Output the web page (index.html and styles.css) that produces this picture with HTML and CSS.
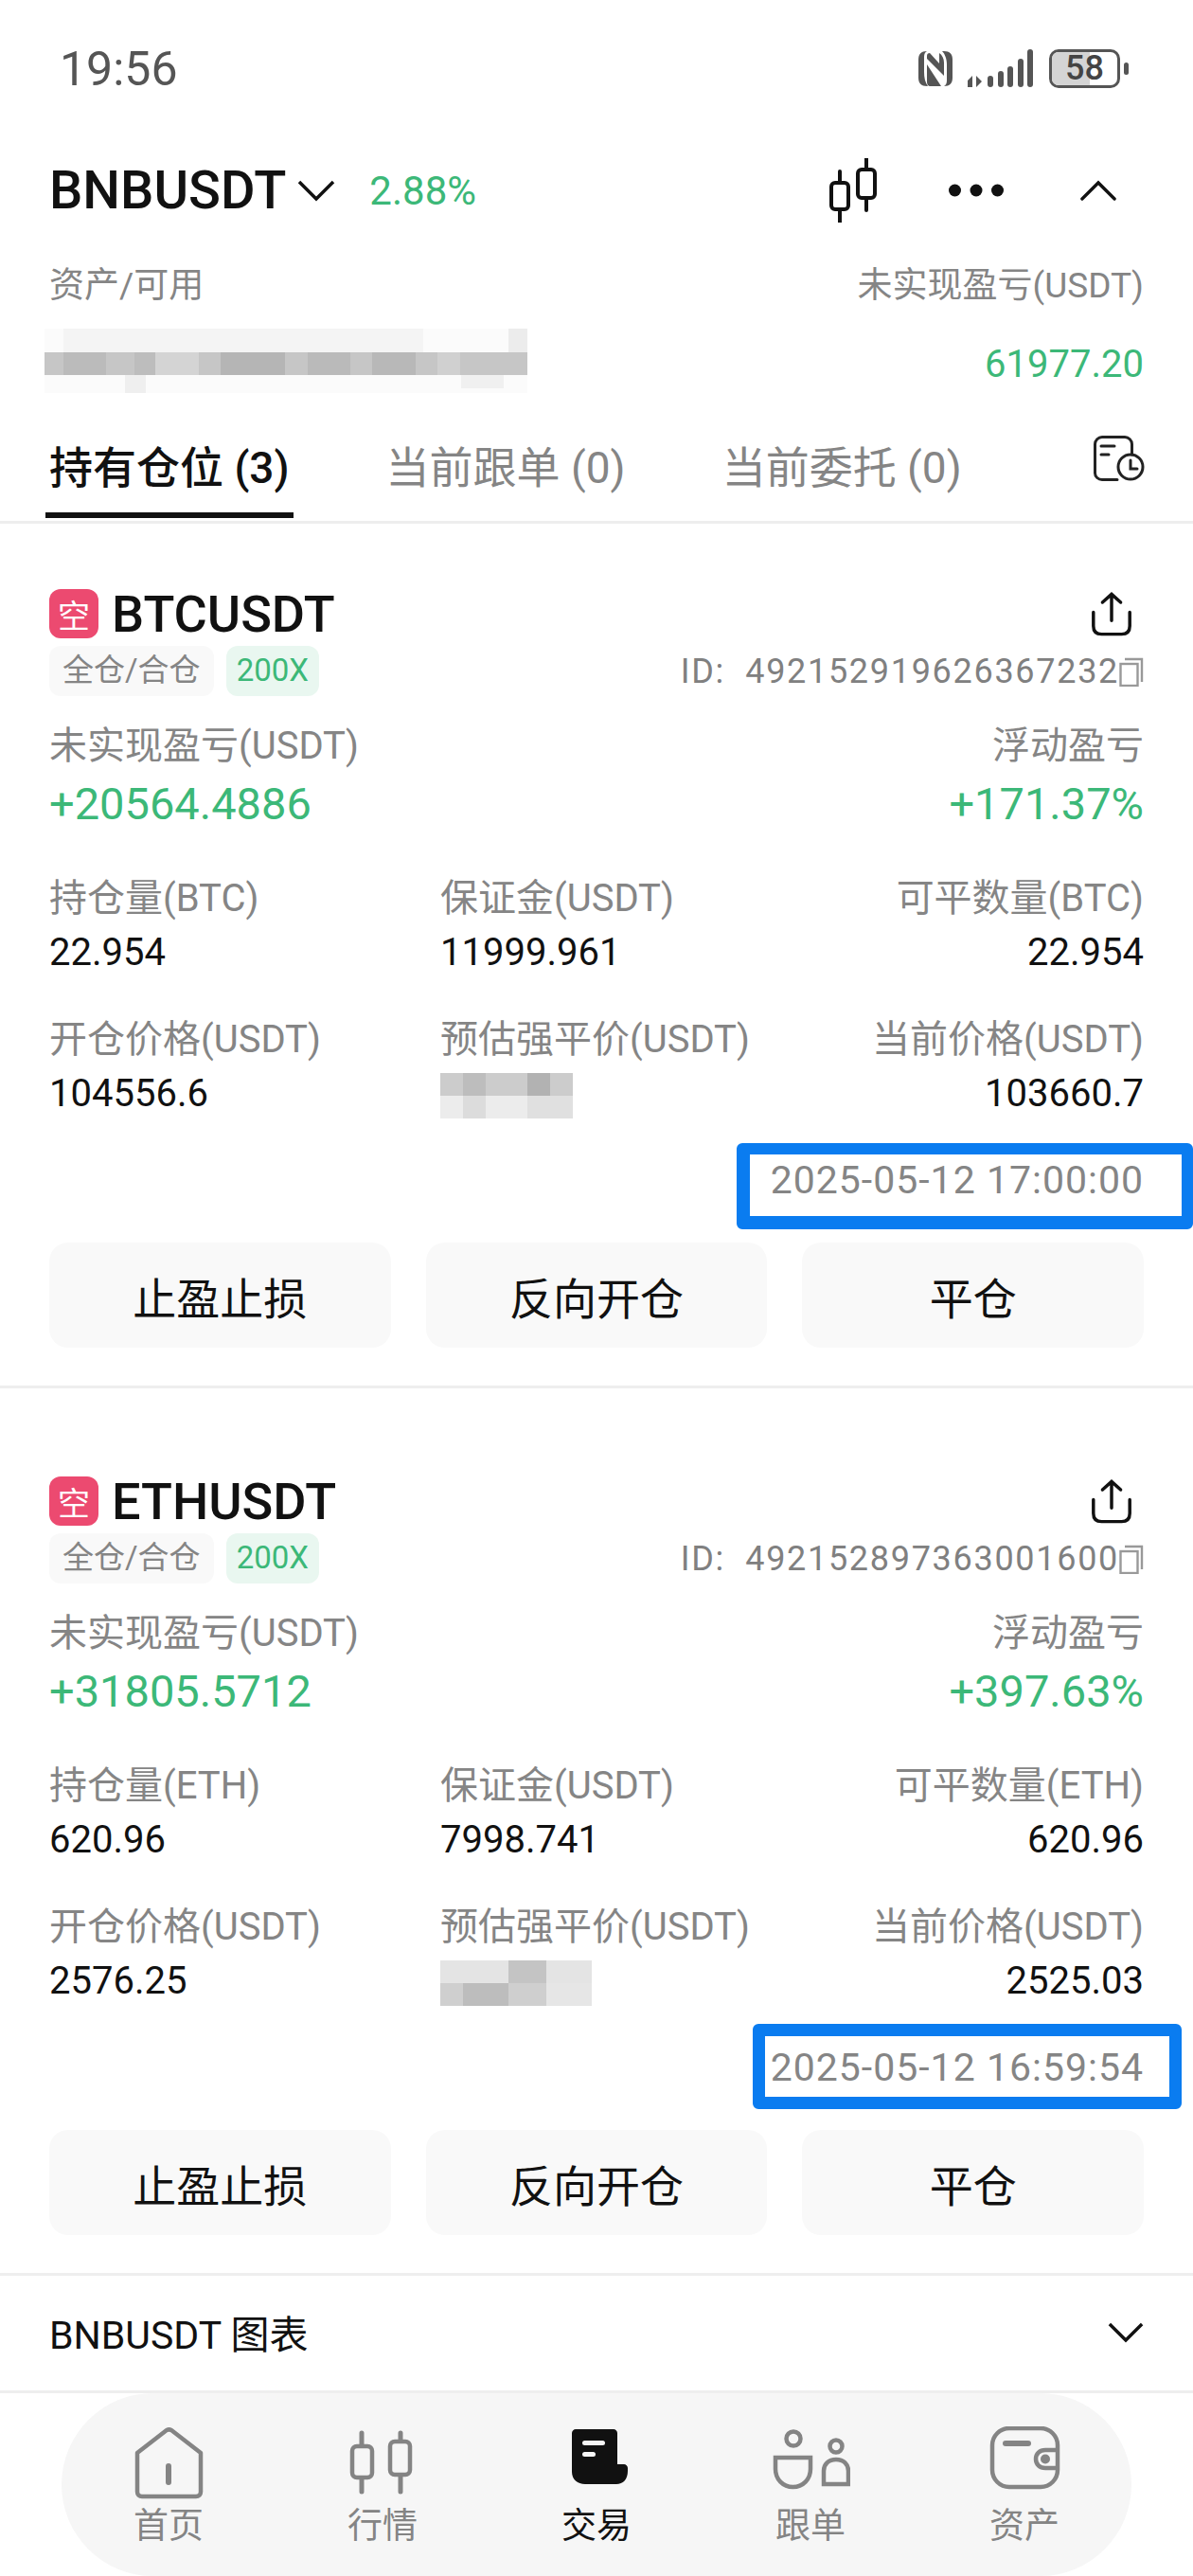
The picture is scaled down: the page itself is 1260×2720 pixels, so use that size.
FILE: index.html

```html
<!DOCTYPE html>
<html lang="zh-CN">
<head>
  <meta charset="UTF-8">
  <meta name="viewport" content="width=device-width, initial-scale=1">
  <title>BNBUSDT 持有仓位</title>
  <link rel="stylesheet" href="styles.css">
</head>
<body>

  <div class="status-bar">
    <span class="clock">19:56</span>
    <div class="status-icons">
      <svg class="ic-nfc" viewBox="0 0 36 37">
        <path d="M9 0C3 0 0 3 0 9v19c0 6 3 9 9 9h1C7 33 6 28 6 22V6c0-3 1-5 3-6zM27 37c6 0 9-3 9-9V9c0-6-3-9-9-9h-2c3 3 5 8 5 14v17c0 3-1 5-3 6zM12 2c-2 0-3 1-3 3v3l18 18V12c0-4-2-8-5-10v11L12 2zM9 14v18c0 3 1 5 4 5h11L9 14z" fill="#555"/>
      </svg>
      <svg class="ic-signal" viewBox="0 0 70 40">
        <path d="M0 33l5-5v12H0zM9 28v12l6-6z" fill="#555"/>
        <rect x="21" y="28" width="6" height="12" rx="3" fill="#555"/>
        <rect x="32" y="23" width="6" height="17" rx="3" fill="#555"/>
        <rect x="42" y="18" width="6" height="22" rx="3" fill="#555"/>
        <rect x="53" y="10" width="6" height="30" rx="3" fill="#555"/>
        <rect x="63" y="0" width="6" height="40" rx="3" fill="#555"/>
      </svg>
      <div class="battery">
        <div class="battery-fill"></div>
        <span class="battery-num">58</span>
      </div>
      <div class="battery-tip"></div>
    </div>
  </div>

  <div class="symbol-bar">
    <span class="symbol-name">BNBUSDT</span>
    <svg class="ic-chev-sm" viewBox="0 0 40 24"><path d="M2 3l18 18L38 3" fill="none" stroke="#111" stroke-width="3.5"/></svg>
    <span class="symbol-change">2.88%</span>
    <div class="symbol-actions">
      <svg class="ic-candle" viewBox="0 0 50 68">
        <path d="M11 14v12M11 54v14M39 0v12M39 42v13" stroke="#111" stroke-width="4" stroke-linecap="round"/>
        <rect x="2" y="26" width="18" height="28" rx="4" fill="none" stroke="#111" stroke-width="4"/>
        <rect x="30" y="12" width="18" height="30" rx="4" fill="none" stroke="#111" stroke-width="4"/>
      </svg>
      <svg class="ic-dots" viewBox="0 0 58 14">
        <circle cx="6.5" cy="7" r="6.5" fill="#111"/><circle cx="29" cy="7" r="6.5" fill="#111"/><circle cx="51.5" cy="7" r="6.5" fill="#111"/>
      </svg>
      <svg class="ic-chev-up" viewBox="0 0 40 24"><path d="M2 21L20 3l18 18" fill="none" stroke="#111" stroke-width="3.5" stroke-linecap="round"/></svg>
    </div>
  </div>

  <div class="asset-row">
    <div class="asset-left">
      <div class="label asset-label">资产/可用</div>
      <svg class="mosaic-wide" viewBox="0 0 510 68">
        <rect y="0" width="510" height="68" fill="#fbfbfb"/>
        <rect x="20" y="0" width="380" height="25" fill="#f4f4f4"/>
        <rect x="490" y="0" width="20" height="25" fill="#ececec"/>
        <rect y="25" width="510" height="24" fill="#c6c6c6"/>
        <rect x="20" y="25" width="45" height="24" fill="#bbb"/>
        <rect x="95" y="25" width="22" height="24" fill="#bdbdbd"/>
        <rect x="117" y="25" width="46" height="24" fill="#d4d4d4"/>
        <rect x="186" y="25" width="68" height="24" fill="#b5b5b5"/>
        <rect x="278" y="25" width="45" height="24" fill="#bababa"/>
        <rect x="346" y="25" width="46" height="24" fill="#b8b8b8"/>
        <rect x="415" y="25" width="24" height="24" fill="#d0d0d0"/>
        <rect x="85" y="49" width="22" height="19" fill="#efefef"/>
        <rect x="440" y="49" width="45" height="14" fill="#f0f0f0"/>
      </svg>
    </div>
    <div class="cell-right">
      <div class="label asset-label">未实现盈亏(USDT)</div>
      <div class="asset-pnl">61977.20</div>
    </div>
  </div>

  <div class="tabs">
    <span class="tab tab-active">持有仓位 (3)</span>
    <span class="tab">当前跟单 (0)</span>
    <span class="tab">当前委托 (0)</span>
    <svg class="ic-history" viewBox="0 0 54 48" fill="none" stroke="#222" stroke-width="3" stroke-linecap="round">
      <path d="M25 46.5H9c-4 0-7.500-3-7.500-7V9c0-4 3.500-7.500 7.500-7.500h24c4 0 7.500 3.500 7.500 7.500v11"/>
      <path d="M8 11h14M8 20h8"/>
      <circle cx="39" cy="33" r="13"/>
      <path d="M39 26v9h7"/>
    </svg>
  </div>

  <section class="position">
    <div class="pos-head">
      <span class="side-badge">空</span>
      <span class="pos-name">BTCUSDT</span>
      <svg class="ic-share" viewBox="0 0 50 48" fill="none" stroke="#111" stroke-width="3.6" stroke-linecap="round">
        <path d="M25 31V3M15 11l10-9 10 9"/>
        <path d="M5 22v15c0 6 3 9 9 9h22c6 0 9-3 9-9V22"/>
      </svg>
    </div>
    <div class="pos-tags">
      <span class="tag">全仓/合仓</span>
      <span class="tag tag-green">200X</span>
      <span class="pos-id">ID:&nbsp;&nbsp;492152919626367232</span>
      <svg class="ic-copy" viewBox="0 0 26 32" fill="none" stroke="#999" stroke-width="2.4">
        <rect x="1.5" y="8" width="18" height="23"/>
        <path d="M6 3h18v24"/>
      </svg>
    </div>
    <div class="pnl-row">
      <div>
        <div class="label">未实现盈亏(USDT)</div>
        <div class="pnl-num">+20564.4886</div>
      </div>
      <div class="cell-right">
        <div class="label">浮动盈亏</div>
        <div class="pnl-num">+171.37%</div>
      </div>
    </div>
    <div class="stat-grid">
      <div>
        <div class="label">持仓量(BTC)</div>
        <div class="stat-num">22.954</div>
      </div>
      <div>
        <div class="label">保证金(USDT)</div>
        <div class="stat-num">11999.961</div>
      </div>
      <div class="cell-right">
        <div class="label">可平数量(BTC)</div>
        <div class="stat-num">22.954</div>
      </div>
      <div>
        <div class="label">开仓价格(USDT)</div>
        <div class="stat-num">104556.6</div>
      </div>
      <div>
        <div class="label">预估强平价(USDT)</div>
        <svg class="mosaic-small" viewBox="0 0 140 48">
          <rect width="140" height="24" fill="#ccc"/>
          <rect x="24" width="24" height="24" fill="#bdbdbd"/>
          <rect x="92" width="24" height="24" fill="#b2b2b2"/>
          <rect y="24" width="140" height="24" fill="#ececec"/>
          <rect x="24" y="24" width="24" height="24" fill="#dcdcdc"/>
          <rect x="92" y="24" width="48" height="24" fill="#e0e0e0"/>
        </svg>
      </div>
      <div class="cell-right">
        <div class="label">当前价格(USDT)</div>
        <div class="stat-num">103660.7</div>
      </div>
    </div>
    <div class="time-row">
      <span class="time-text">2025-05-12 17:00:00</span>
      <div class="mark mark-first"></div>
    </div>
    <div class="btn-row">
      <button class="pos-btn">止盈止损</button>
      <button class="pos-btn">反向开仓</button>
      <button class="pos-btn">平仓</button>
    </div>
  </section>

  <section class="position">
    <div class="pos-head">
      <span class="side-badge">空</span>
      <span class="pos-name">ETHUSDT</span>
      <svg class="ic-share" viewBox="0 0 50 48" fill="none" stroke="#111" stroke-width="3.6" stroke-linecap="round">
        <path d="M25 31V3M15 11l10-9 10 9"/>
        <path d="M5 22v15c0 6 3 9 9 9h22c6 0 9-3 9-9V22"/>
      </svg>
    </div>
    <div class="pos-tags">
      <span class="tag">全仓/合仓</span>
      <span class="tag tag-green">200X</span>
      <span class="pos-id">ID:&nbsp;&nbsp;492152897363001600</span>
      <svg class="ic-copy" viewBox="0 0 26 32" fill="none" stroke="#999" stroke-width="2.4">
        <rect x="1.5" y="8" width="18" height="23"/>
        <path d="M6 3h18v24"/>
      </svg>
    </div>
    <div class="pnl-row">
      <div>
        <div class="label">未实现盈亏(USDT)</div>
        <div class="pnl-num">+31805.5712</div>
      </div>
      <div class="cell-right">
        <div class="label">浮动盈亏</div>
        <div class="pnl-num">+397.63%</div>
      </div>
    </div>
    <div class="stat-grid">
      <div>
        <div class="label">持仓量(ETH)</div>
        <div class="stat-num">620.96</div>
      </div>
      <div>
        <div class="label">保证金(USDT)</div>
        <div class="stat-num">7998.741</div>
      </div>
      <div class="cell-right">
        <div class="label">可平数量(ETH)</div>
        <div class="stat-num">620.96</div>
      </div>
      <div>
        <div class="label">开仓价格(USDT)</div>
        <div class="stat-num">2576.25</div>
      </div>
      <div>
        <div class="label">预估强平价(USDT)</div>
        <svg class="mosaic-small mosaic-2" viewBox="0 0 160 48">
          <rect width="160" height="24" fill="#e4e4e4"/>
          <rect x="72" width="40" height="24" fill="#c4c4c4"/>
          <rect y="24" width="160" height="24" fill="#cfcfcf"/>
          <rect x="24" y="24" width="48" height="24" fill="#bdbdbd"/>
          <rect x="112" y="24" width="48" height="24" fill="#e6e6e6"/>
        </svg>
      </div>
      <div class="cell-right">
        <div class="label">当前价格(USDT)</div>
        <div class="stat-num">2525.03</div>
      </div>
    </div>
    <div class="time-row">
      <span class="time-text">2025-05-12 16:59:54</span>
      <div class="mark mark-second"></div>
    </div>
    <div class="btn-row">
      <button class="pos-btn">止盈止损</button>
      <button class="pos-btn">反向开仓</button>
      <button class="pos-btn">平仓</button>
    </div>
  </section>

  <div class="chart-row">
    <span>BNBUSDT 图表</span>
    <svg class="ic-chev-down" viewBox="0 0 40 24"><path d="M2 3l18 18L38 3" fill="none" stroke="#111" stroke-width="3.6"/></svg>
  </div>

  <nav class="tabbar">
    <div class="nav-item">
      <svg class="nav-icon" viewBox="0 0 80 80" fill="none" stroke="#848484" stroke-width="4.500" stroke-linecap="round" stroke-linejoin="round">
        <path d="M7 28L38 4c2-1 3-1 5 0l31 24v41c0 3-2 5-5 5H12c-3 0-5-2-5-5z"/>
        <path d="M40 42v17" stroke-width="6"/>
      </svg>
      <span>首页</span>
    </div>
    <div class="nav-item">
      <svg class="nav-icon" viewBox="0 0 80 80" fill="none" stroke="#848484" stroke-width="4.500" stroke-linecap="round">
        <path d="M18 7v12M18 56v13M59 7v7M59 53v16" stroke-width="5"/>
        <rect x="8" y="21" width="21" height="33" rx="5"/>
        <rect x="48" y="16" width="21" height="35" rx="5"/>
      </svg>
      <span>行情</span>
    </div>
    <div class="nav-item nav-active">
      <svg class="nav-icon" viewBox="0 0 80 80">
        <path d="M18 3h40c2 0 4 2 4 4v33h7c2 0 4 2 4 4v3c0 9-5 14-12 14H28c-8 0-14-5-14-13V7c0-2 2-4 4-4z" fill="#111"/>
        <rect x="25" y="15" width="24" height="5" rx="2.500" fill="#f6f6f6"/>
        <rect x="25" y="27" width="14" height="5" rx="2.500" fill="#f6f6f6"/>
      </svg>
      <span>交易</span>
    </div>
    <div class="nav-item">
      <svg class="nav-icon nav-icon-wide" viewBox="0 0 84 80" fill="none" stroke="#848484" stroke-width="4.500">
        <circle cx="24" cy="13" r="7.500"/>
        <path d="M5 33h37v12c0 11-8 19-18.500 19S5 56 5 45z"/>
        <circle cx="69" cy="21" r="6.500"/>
        <path d="M56 61V47c0-7 5-12 13-12s13 5 13 12v14z"/>
      </svg>
      <span>跟单</span>
    </div>
    <div class="nav-item">
      <svg class="nav-icon" viewBox="0 0 80 80" fill="none" stroke="#848484" stroke-width="4.500">
        <rect x="6" y="2" width="69" height="62" rx="18"/>
        <path d="M20 18h24" stroke-width="6" stroke-linecap="round"/>
        <path d="M75 25H62c-6 0-10 4-10 9.500S56 44 62 44h13"/>
        <circle cx="62" cy="34.500" r="5" fill="#848484" stroke="none"/>
      </svg>
      <span>资产</span>
    </div>
  </nav>

</body>
</html>
```

FILE: styles.css

```css
* {
  box-sizing: border-box;
}

body {
  margin: 0;
  width: 1260px;
  height: 2720px;
  overflow: hidden;
  background: #fff;
  color: #111;
  font-family: Roboto, "Noto Sans CJK SC", sans-serif;
}

svg {
  display: block;
  flex: none;
}

/* status bar */
.status-bar {
  height: 144px;
  padding: 0 68px 0 63px;
  display: flex;
  align-items: center;
  justify-content: space-between;
}

.clock {
  font-size: 50px;
  padding-top: 2px;
  color: #555;
}

.status-icons {
  display: flex;
  align-items: center;
}

.ic-nfc {
  width: 36px;
  height: 37px;
  margin-right: 16px;
}

.ic-signal {
  width: 70px;
  height: 40px;
  margin-right: 16px;
}

.battery {
  position: relative;
  width: 75px;
  height: 41px;
  border: 3px solid #555;
  border-radius: 10px;
  overflow: hidden;
  text-align: center;
}

.battery-fill {
  position: absolute;
  left: 0;
  top: 0;
  bottom: 0;
  width: 58%;
  background: #d4d4d4;
}

.battery-num {
  position: relative;
  font-size: 36px;
  font-weight: 500;
  line-height: 35px;
  color: #444;
  display: block;
}

.battery-tip {
  width: 5px;
  height: 13px;
  margin-left: 4px;
  background: #555;
  border-radius: 3px;
}

/* symbol header */
.symbol-bar {
  height: 114px;
  padding: 0 52px;
  display: flex;
  align-items: center;
}

.symbol-name {
  font-size: 56px;
  font-weight: 500;
}

.ic-chev-sm {
  width: 40px;
  height: 24px;
  margin-left: 12px;
}

.symbol-change {
  font-size: 42px;
  color: #3cb878;
  margin-left: 36px;
}

.symbol-actions {
  margin-left: auto;
  display: flex;
  align-items: center;
  margin-right: 29px;
}

.ic-candle {
  width: 50px;
  height: 68px;
  margin-right: 76px;
}

.ic-dots {
  width: 58px;
  height: 14px;
  margin-right: 81px;
}

.ic-chev-up {
  width: 38px;
  height: 23px;
}

.label {
  font-size: 40px;
  line-height: 46px;
  color: #858585;
  white-space: nowrap;
}

.asset-row {
  padding: 21px 52px 0;
  height: 158px;
  display: flex;
  justify-content: space-between;
}

.asset-left {
  margin-left: -5px;
}

.asset-label {
  font-size: 37px;
  margin-left: 5px;
}

.mosaic-wide {
  width: 510px;
  height: 68px;
  margin-top: 22px;
}

.asset-pnl {
  font-size: 40px;
  line-height: 48px;
  margin-top: 36px;
  color: #3cb878;
}

/* tabs */
.tabs {
  height: 137px;
  padding: 0 48px;
  display: flex;
  align-items: flex-start;
  border-bottom: 3px solid #eee;
  position: relative;
}

.tab {
  font-size: 46px;
  line-height: 60px;
  padding: 48px 4px 0;
  height: 131px;
  color: #858585;
  margin-right: 94px;
  white-space: nowrap;
}

.tab-active {
  color: #111;
  font-weight: 500;
  border-bottom: 6px solid #111;
}

.ic-history {
  position: absolute;
  right: 51px;
  top: 44px;
  width: 54px;
  height: 48px;
}

/* position card */
.position {
  padding: 69px 52px 0;
  height: 913px;
  border-bottom: 3px solid #eee;
}

.position + .position {
  height: 937px;
  padding-top: 93px;
}

.pos-head {
  height: 52px;
  display: flex;
  align-items: center;
}

.side-badge {
  width: 52px;
  height: 52px;
  border-radius: 12px;
  background: #ec4a70;
  color: #fff;
  font-size: 34px;
  display: flex;
  align-items: center;
  justify-content: center;
}

.pos-name {
  font-size: 54px;
  font-weight: 500;
  margin-left: 14px;
}

.ic-share {
  width: 48px;
  height: 47px;
  margin-left: auto;
  margin-right: 10px;
}

.pos-tags {
  height: 53px;
  margin-top: 8px;
  display: flex;
  align-items: center;
}

.tag {
  height: 53px;
  padding: 0 14px;
  border-radius: 12px;
  background: #f9f9f9;
  color: #858585;
  font-size: 33px;
  line-height: 52px;
  margin-right: 13px;
}

.tag-green {
  padding: 0 11px;
  background: #e9f7f0;
  color: #3cb878;
}

.pos-id {
  margin-left: auto;
  font-size: 36px;
  letter-spacing: 1.7px;
  color: #808080;
}

.ic-copy {
  width: 26px;
  height: 32px;
}

.pnl-row {
  display: flex;
  justify-content: space-between;
  margin-top: 30px;
}

.cell-right {
  text-align: right;
}

.pnl-num {
  font-size: 47px;
  line-height: 60px;
  margin-top: 8px;
  color: #3cb878;
}

.stat-grid {
  display: grid;
  grid-template-columns: 413px 1fr auto;
  row-gap: 43px;
  margin-top: 47px;
}

.stat-num {
  font-size: 40px;
  line-height: 52px;
  margin-top: 8px;
  color: #111;
}

.mosaic-small {
  width: 140px;
  height: 48px;
  margin-top: 12px;
}

.mosaic-2 {
  width: 160px;
}

.time-row {
  position: relative;
  margin-top: 40px;
  text-align: right;
  height: 50px;
}

.time-text {
  font-size: 41px;
  letter-spacing: 1px;
  line-height: 50px;
  color: #858585;
}

/* blue highlight drawn over the screenshot */
.mark {
  position: absolute;
  border-style: solid;
  border-color: #0a7cf0;
  border-radius: 6px;
}

.mark-first {
  left: 726px;
  right: -52px;
  top: -14px;
  height: 91px;
  border-width: 12px 12px 14px 14px;
}

.mark-second {
  left: 743px;
  right: -40px;
  top: -21px;
  height: 90px;
  border-width: 13px;
}

.btn-row {
  display: grid;
  grid-template-columns: repeat(3, 1fr);
  column-gap: 37px;
  margin-top: 41px;
}

.pos-btn {
  height: 111px;
  border: 0;
  border-radius: 20px;
  background: #f9f9f9;
  color: #111;
  font-family: inherit;
  font-size: 46px;
}

.chart-row {
  height: 124px;
  padding: 0 52px 3px;
  display: flex;
  align-items: center;
  justify-content: space-between;
  font-size: 41px;
  border-bottom: 3px solid #eee;
}

.ic-chev-down {
  width: 38px;
  height: 23px;
}

/* bottom nav */
.tabbar {
  margin: 0 65px;
  height: 193px;
  border-radius: 97px;
  background: #f6f6f6;
  display: flex;
  justify-content: space-around;
  padding: 35px 0 0;
}

.nav-item {
  width: 226px;
  display: flex;
  flex-direction: column;
  align-items: center;
  font-size: 37px;
  line-height: 46px;
  color: #848484;
}

.nav-icon {
  width: 80px;
  height: 80px;
  margin-bottom: 3px;
}

.nav-icon-wide {
  width: 84px;
}

.nav-active {
  color: #111;
}
```
